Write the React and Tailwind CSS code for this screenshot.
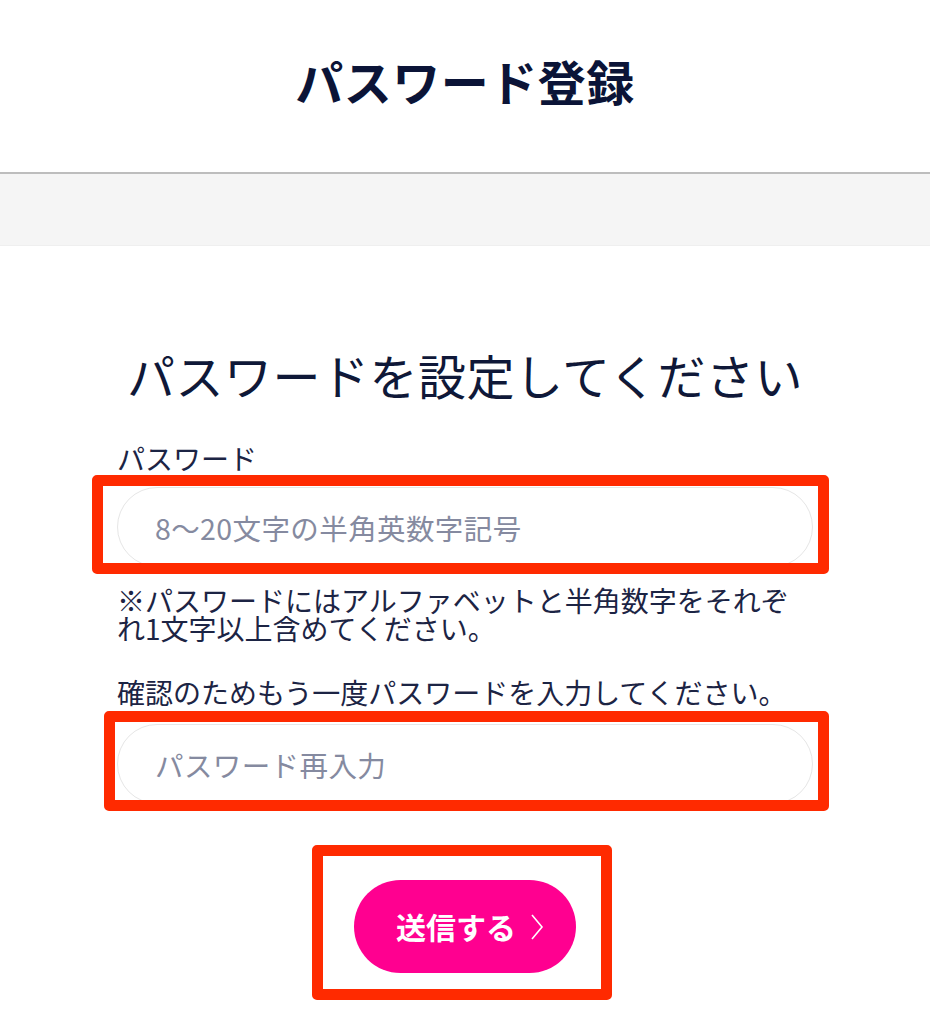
import React from "react";

function RedMark({ className }) {
  return (
    <div
      className={`pointer-events-none absolute rounded-[5px] border-[11px] border-[#ff2a00] ${className}`}
    />
  );
}

function Field({ placeholder, markClass }) {
  return (
    <div className="relative">
      <input
        type="password"
        placeholder={placeholder}
        className="block h-[80px] w-full rounded-full border border-[#e6e6e6] bg-white pl-[37px] pr-6 text-[28.5px] tracking-[0.4px] text-[#1c2444] outline-none placeholder:text-[#858aa0]"
      />
      <RedMark className={markClass} />
    </div>
  );
}

export default function App() {
  return (
    <div className="min-h-[1024px] bg-white font-['Noto_Sans_CJK_JP','Noto_Sans',sans-serif] text-[#1c2444]">
      {/* Header */}
      <header className="flex h-[174px] items-center justify-center border-b-2 border-[#bdbdbd] pb-[12px]">
        <h1 className="text-[48px] font-bold leading-none tracking-[0.5px] text-[#0b1437]">
          パスワード登録
        </h1>
      </header>
      <div className="h-[72px] border-b border-[#efefef] bg-[#f5f5f5]" />

      {/* Form */}
      <main className="mx-auto w-[696px]">
        <h2 className="mt-[104px] whitespace-nowrap text-center text-[48px] leading-[48px] tracking-[0.5px] text-[#0f1838]">
          パスワードを設定してください
        </h2>

        <p className="mt-[44px] text-[28px] leading-[32px]">パスワード</p>
        <div className="mt-[13px]">
          <Field
            placeholder="8〜20文字の半角英数字記号"
            markClass="-left-[25px] -right-[16px] -top-[12px] -bottom-[7px]"
          />
        </div>

        <p className="mt-[19px] whitespace-nowrap text-[28px] leading-[28px]">
          ※パスワードにはアルファベットと半角数字をそれぞ
          <br />
          れ1文字以上含めてください。
        </p>

        <p className="mt-[34px] whitespace-nowrap text-[28px] leading-[32px]">
          確認のためもう一度パスワードを入力してください。
        </p>
        <div className="mt-[16px]">
          <Field
            placeholder="パスワード再入力"
            markClass="-left-[13px] -right-[16px] -top-[13px] -bottom-[7px]"
          />
        </div>

        <div className="mt-[76px] flex justify-center">
          <div className="relative">
            <button
              type="button"
              className="flex h-[93px] w-[222px] items-center justify-center gap-[14px] rounded-full bg-[#ff0090] pl-[10px] text-[30px] font-bold text-white"
            >
              <span>送信する</span>
              <svg
                width="14"
                height="28"
                viewBox="0 0 14 28"
                fill="none"
                stroke="white"
                strokeWidth="1.6"
              >
                <path d="M2 2 L12 14 L2 26" />
              </svg>
            </button>
            <RedMark className="-left-[42px] -right-[36px] -top-[35px] -bottom-[27px]" />
          </div>
        </div>
      </main>
    </div>
  );
}
